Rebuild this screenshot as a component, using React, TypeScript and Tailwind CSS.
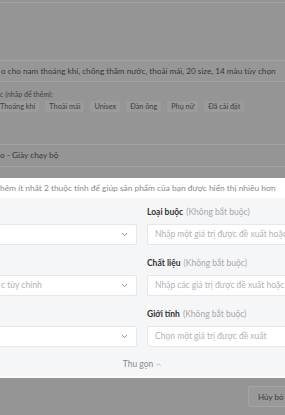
import { ChevronDown, ChevronUp } from "lucide-react";

const tags = ["Thoáng khí", "Thoải mái", "Unisex", "Đàn ông", "Phụ nữ", "Đã cài đặt"];

function Field({ label, placeholder }: { label: string; placeholder: string }) {
  return (
    <div className="flex flex-col">
      <div className="h-[12px] flex items-center text-[8.5px] leading-none whitespace-nowrap">
        <span className="font-bold text-[#333333]">{label}</span>
        <span className="ml-[3px] text-[#a8a8a8]">(Không bắt buộc)</span>
      </div>
      <div className="mt-[6px] h-[21px] w-[160px] flex items-center pl-[7px] bg-white border border-[#e6e7ea] rounded-[2px] text-[8.5px] text-[#b2b2b2] whitespace-nowrap overflow-hidden">
        {placeholder}
      </div>
    </div>
  );
}

function SelectBox({ text }: { text?: string }) {
  return (
    <div className="h-[21px] w-[147px] -ml-[10px] flex items-center justify-between pr-[7px] bg-white border border-[#e6e7ea] rounded-[2px] text-[8.5px] text-[#b2b2b2] whitespace-nowrap overflow-hidden">
      <span className="pl-[10px]">{text}</span>
      <ChevronDown className="w-[9px] h-[9px] text-[#666]" strokeWidth={2} />
    </div>
  );
}

export default function App() {
  return (
    <div className="w-[285px] h-[415px] overflow-hidden bg-[#959595] font-['Lato',sans-serif] relative">
      {/* dimmed top part */}
      <div className="pt-[2px]">
        <div className="border-t border-[#a2a2a2]" />
      </div>

      <div className="mt-[57px] h-[22px] -ml-[4px] w-[300px] border border-[#a3a3a3] bg-[#979797] flex items-center pl-[4px] text-[8.2px] text-[#383838] whitespace-nowrap overflow-hidden">
        o cho nam thoáng khí, chống thấm nước, thoải mái, 20 size, 14 màu tùy chọn
      </div>

      <div className="mt-[7px] text-[7px] leading-[10px] text-[#424242] whitespace-nowrap">
        c (nhấp để thêm):
      </div>

      <div className="mt-[2px] flex gap-[6px] -ml-[4px] h-[11px]">
        {tags.map((t) => (
          <span
            key={t}
            className="px-[4px] bg-[#9b9b9b] rounded-[2px] text-[7.3px] leading-[11px] text-[#3e3e3e] whitespace-nowrap"
          >
            {t}
          </span>
        ))}
      </div>

      <div className="mt-[32px] h-[23px] -ml-[4px] w-[300px] border-y border-[#a3a3a3] flex items-center pl-[4px] text-[8.3px] text-[#383838] whitespace-nowrap">
        o - Giày chạy bộ
      </div>

      {/* highlighted section */}
      <div className="mt-[11px] bg-white h-[20px] flex items-center text-[8.4px] text-[#8a8a8a] whitespace-nowrap overflow-hidden">
        hêm ít nhất 2 thuộc tính để giúp sản phẩm của bạn được hiển thị nhiều hơn
      </div>

      <div className="bg-[#f5f6f8] h-[178px] pt-[8px] flex flex-col">
        <div className="grid grid-cols-[137px_1fr] gap-x-[10px] gap-y-[12px]">
          <div className="pt-[18px]">
            <SelectBox />
          </div>
          <Field label="Loại buộc" placeholder="Nhập một giá trị được đề xuất hoặc tùy chỉnh" />

          <div className="pt-[18px]">
            <SelectBox text="c tùy chỉnh" />
          </div>
          <Field label="Chất liệu" placeholder="Nhập các giá trị được đề xuất hoặc tùy chỉnh" />

          <div className="pt-[18px]">
            <SelectBox />
          </div>
          <Field label="Giới tính" placeholder="Chọn một giá trị được đề xuất" />
        </div>

        <div className="mt-[11px] flex items-center justify-center gap-[2px] text-[8.5px] text-[#8a8a8a]">
          <span>Thu gọn</span>
          <ChevronUp className="w-[7px] h-[7px]" strokeWidth={2} />
        </div>
      </div>
      <div className="h-[2px] bg-[#fbfbfc]" />

      {/* dimmed footer */}
      <div className="flex justify-end pt-[8px]">
        <div className="h-[21px] w-[48px] -mr-[11px] border border-[#a4a4a4] bg-[#999999] rounded-[2px] flex items-center pl-[9px] text-[8px] text-[#383838]">
          Hủy bỏ
        </div>
      </div>
    </div>
  );
}
